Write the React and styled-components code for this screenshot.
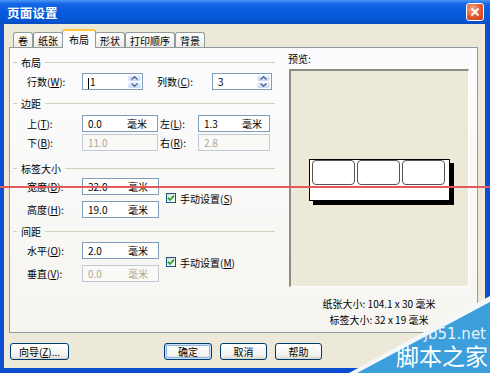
import React from 'react'
import styled, { createGlobalStyle } from 'styled-components'

const GlobalStyle = createGlobalStyle`
    body {
        margin: 0;
        font-family: "Noto Sans CJK SC", "Liberation Sans", sans-serif;
        font-size: 10px;
        color: #000;
    }
`

const Window = styled.div`
    position: relative;
    width: 490px;
    height: 373px;
    display: flex;
    flex-direction: column;
    background: #0B4FD0;
    overflow: hidden;
`

const TitleBar = styled.div`
    height: 24px;
    flex: none;
    display: flex;
    align-items: center;
    justify-content: space-between;
    padding: 0 6px 0 7px;
    background: linear-gradient(180deg, #4A95F6 0%, #1466E4 16%, #075CDC 50%, #0556D4 85%, #0A49BE 100%);
    color: #fff;
    font-size: 12.5px;
    font-weight: 700;
    letter-spacing: 0.2px;
`

const CloseButton = styled.div`
    width: 18px;
    height: 18px;
    box-sizing: border-box;
    border: 1px solid #fff;
    border-radius: 3px;
    background: radial-gradient(circle at 35% 30%, #F4A888, #E2582E 55%, #C03A14);
    display: flex;
    align-items: center;
    justify-content: center;
`

const Body = styled.div`
    flex: 1;
    margin: 0 5px 5px 4px;
    padding: 5px 7px 8px 5px;
    background: #ECE9D8;
    display: flex;
    flex-direction: column;
`

const TabStrip = styled.div`
    display: flex;
    align-items: flex-end;
    height: 18px;
    padding-left: 4px;
    position: relative;
    z-index: 1;
`

const Tab = styled.div`
    height: ${p => (p.$active ? 19 : 15)}px;
    margin: 0 ${p => (p.$active ? -1 : 0)}px ${p => (p.$active ? -1 : 0)}px;
    padding: 0 ${p => (p.$active ? 6 : 4)}px;
    box-sizing: border-box;
    border: 1px solid #919B9C;
    border-bottom: none;
    border-top: ${p => (p.$active ? '2px solid #FFC83C' : '1px solid #919B9C')};
    border-radius: 3px 3px 0 0;
    background: ${p => (p.$active ? '#FCFCFE' : 'linear-gradient(#FFFFFF, #ECEBE6)')};
    display: flex;
    align-items: center;
    white-space: nowrap;
    position: relative;
    z-index: ${p => (p.$active ? 2 : 1)};
`

const Panel = styled.div`
    flex: 1;
    border: 1px solid #919B9C;
    background: linear-gradient(#FCFCFE, #F6F5F0);
    display: flex;
`

const LeftCol = styled.div`
    width: 270px;
    flex: none;
    padding: 7px 5px 0 0;
    box-sizing: border-box;
`

const GroupHeader = styled.div`
    display: flex;
    align-items: center;
    gap: 4px;
    height: 14px;
    padding-left: 3px;
    margin-top: ${p => p.$mt || 0}px;
    &::before {
        content: '';
        width: 4px;
        border-top: 1px solid #D0D0BF;
    }
    &::after {
        content: '';
        flex: 1;
        border-top: 1px solid #D0D0BF;
    }
`

const Rows = styled.div`
    display: flex;
    flex-direction: column;
    gap: ${p => p.$gap}px;
    margin-top: ${p => p.$mt}px;
`

const Row = styled.div`
    display: flex;
    align-items: center;
    height: 17px;
    padding-left: 17px;
`

const Label = styled.span`
    width: ${p => p.$w}px;
    margin-left: ${p => p.$ml || 0}px;
    flex: none;
    white-space: nowrap;
`

const Key = styled.span`
    text-decoration: underline;
`

const Field = styled.div`
    width: ${p => p.$w}px;
    height: 17px;
    flex: none;
    box-sizing: border-box;
    border: 1px solid ${p => (p.$disabled ? '#C3C9D3' : '#7F9DB9')};
    background: ${p => (p.$disabled ? '#F9F9F6' : '#fff')};
    color: ${p => (p.$disabled ? '#ACA899' : '#000')};
    display: flex;
    align-items: center;
    justify-content: space-between;
    padding: 0 ${p => (p.$pr === undefined ? 10 : p.$pr)}px 0 5px;
`

const Caret = styled.span`
    display: inline-block;
    width: 1px;
    height: 11px;
    background: #000;
    margin-right: 1px;
    vertical-align: middle;
`

const Spin = styled.div`
    display: flex;
    flex-direction: column;
    gap: 1px;
    width: 13px;
    height: 13px;
`

const SpinBtn = styled.div`
    flex: 1;
    border-radius: 2px;
    background: linear-gradient(#EEF3FE, #C6D6FA);
    display: flex;
    align-items: center;
    justify-content: center;
`

const SizeBlock = styled.div`
    display: flex;
    align-items: center;
    margin-top: ${p => p.$mt}px;
`

const CheckLabel = styled.div`
    display: flex;
    align-items: center;
    gap: 4px;
    margin-left: 7px;
    white-space: nowrap;
`

const CheckBox = styled.span`
    width: 10px;
    height: 10px;
    box-sizing: border-box;
    border: 1px solid #1C5180;
    background: linear-gradient(135deg, #DCDCD7, #FFFFFF);
    display: flex;
    align-items: center;
    justify-content: center;
`

const PreviewCol = styled.div`
    flex: 1;
    padding-top: 4px;
    display: flex;
    flex-direction: column;
`

const Caption = styled.div`
    height: 14px;
    line-height: 14px;
    padding-left: 8px;
`

const PreviewBox = styled.div`
    margin: 3px 0 0 9px;
    width: 180px;
    height: 218px;
    box-sizing: border-box;
    border-top: 2px solid #8E8B80;
    border-left: 2px solid #8E8B80;
    border-right: 1px solid #fff;
    border-bottom: 1px solid #fff;
    background: #ECE9D8;
    display: flex;
    align-items: center;
    justify-content: center;
`

const Paper = styled.div`
    width: 141px;
    height: 42px;
    margin-top: 3px;
    box-sizing: border-box;
    border: 1px solid #000;
    background: #fff;
    box-shadow: 4px 4px 0 #000;
    display: flex;
    gap: 2px;
    padding-left: 2px;
`

const LabelCell = styled.div`
    width: 43px;
    height: 25px;
    box-sizing: border-box;
    border: 1px solid #555;
    border-radius: 4px;
`

const SizeInfo = styled.div`
    margin: 9px 0 0 9px;
    width: 180px;
    text-align: center;
    line-height: 16px;
`

const ButtonRow = styled.div`
    display: flex;
    margin-top: 10px;
    padding-left: 1px;
`

const ButtonGroup = styled.div`
    display: flex;
    gap: 8px;
    margin-left: 95px;
`

const Button = styled.div`
    width: ${p => p.$w}px;
    height: 17px;
    box-sizing: border-box;
    border: 1px solid #003C74;
    border-radius: 3px;
    background: linear-gradient(#FFFFFF, #F3F3EF 75%, #D8D3C8);
    box-shadow: ${p => (p.$default ? 'inset 0 0 0 1px #CDE0FB, inset 0 0 0 2px #8DB2EE' : 'none')};
    display: flex;
    align-items: center;
    justify-content: center;
    white-space: nowrap;
`

const RedLine = styled.div`
    position: absolute;
    left: 0;
    top: 186px;
    width: 490px;
    height: 2px;
    background: #E45A5A;
    pointer-events: none;
`

const Watermark = styled.svg`
    position: absolute;
    right: 0;
    bottom: 0;
    pointer-events: none;
`

const Arrow = ({ up }) => (
    <svg width="7" height="4" viewBox="0 0 7 4">
        <path
            d={up ? 'M0.5 3.5 L3.5 0.8 L6.5 3.5' : 'M0.5 0.5 L3.5 3.2 L6.5 0.5'}
            fill="none"
            stroke="#4D6185"
            strokeWidth="1.3"
        />
    </svg>
)

const SpinField = ({ w, value, caret }) => (
    <Field $w={w} $pr={1}>
        <span>
            {caret && <Caret />}
            {value}
        </span>
        <Spin>
            <SpinBtn>
                <Arrow up />
            </SpinBtn>
            <SpinBtn>
                <Arrow />
            </SpinBtn>
        </Spin>
    </Field>
)

const MmField = ({ w, value, disabled, pr }) => (
    <Field $w={w} $disabled={disabled} $pr={pr}>
        <span>{value}</span>
        {value !== '11.0' && value !== '2.8' && <span>毫米</span>}
    </Field>
)

const Check = ({ children }) => (
    <CheckLabel>
        <CheckBox>
            <svg width="8" height="8" viewBox="0 0 8 8">
                <path d="M1 3.8 L3 6 L7 1.6" fill="none" stroke="#21A121" strokeWidth="1.6" />
            </svg>
        </CheckBox>
        <span>{children}</span>
    </CheckLabel>
)

const tabs = ['卷', '纸张', '布局', '形状', '打印顺序', '背景']

const App = () => (
    <Window>
        <GlobalStyle />
        <TitleBar>
            <span>页面设置</span>
            <CloseButton>
                <svg width="10" height="10" viewBox="0 0 10 10">
                    <path d="M1.5 1.5 L8.5 8.5 M8.5 1.5 L1.5 8.5" stroke="#fff" strokeWidth="1.8" />
                </svg>
            </CloseButton>
        </TitleBar>
        <Body>
            <TabStrip>
                {tabs.map(t => (
                    <Tab key={t} $active={t === '布局'}>
                        {t}
                    </Tab>
                ))}
            </TabStrip>
            <Panel>
                <LeftCol>
                    <GroupHeader>布局</GroupHeader>
                    <Rows $mt={4} $gap={0}>
                        <Row>
                            <Label $w={55}>
                                行数(<Key>W</Key>):
                            </Label>
                            <SpinField w={61} value="1" caret />
                            <Label $w={55} $ml={14}>
                                列数(<Key>C</Key>):
                            </Label>
                            <SpinField w={60} value="3" />
                        </Row>
                    </Rows>

                    <GroupHeader $mt={6}>边距</GroupHeader>
                    <Rows $mt={5} $gap={2}>
                        <Row>
                            <Label $w={55}>
                                上(<Key>T</Key>):
                            </Label>
                            <MmField w={76} value="0.0" />
                            <Label $w={38} $ml={2}>
                                左(<Key>L</Key>):
                            </Label>
                            <MmField w={72} value="1.3" pr={7} />
                        </Row>
                        <Row>
                            <Label $w={55}>
                                下(<Key>B</Key>):
                            </Label>
                            <MmField w={76} value="11.0" disabled />
                            <Label $w={38} $ml={2}>
                                右(<Key>R</Key>):
                            </Label>
                            <MmField w={72} value="2.8" disabled />
                        </Row>
                    </Rows>

                    <GroupHeader $mt={10}>标签大小</GroupHeader>
                    <SizeBlock $mt={3}>
                        <Rows $mt={0} $gap={6}>
                            <Row>
                                <Label $w={55}>
                                    宽度(<Key>D</Key>):
                                </Label>
                                <MmField w={77} value="32.0" />
                            </Row>
                            <Row>
                                <Label $w={55}>
                                    高度(<Key>H</Key>):
                                </Label>
                                <MmField w={77} value="19.0" />
                            </Row>
                        </Rows>
                        <Check>
                            手动设置(<Key>S</Key>)
                        </Check>
                    </SizeBlock>

                    <GroupHeader $mt={6}>间距</GroupHeader>
                    <SizeBlock $mt={4}>
                        <Rows $mt={0} $gap={6}>
                            <Row>
                                <Label $w={55}>
                                    水平(<Key>O</Key>):
                                </Label>
                                <MmField w={77} value="2.0" />
                            </Row>
                            <Row>
                                <Label $w={55}>
                                    垂直(<Key>V</Key>):
                                </Label>
                                <MmField w={77} value="0.0" disabled />
                            </Row>
                        </Rows>
                        <Check>
                            手动设置(<Key>M</Key>)
                        </Check>
                    </SizeBlock>
                </LeftCol>

                <PreviewCol>
                    <Caption>预览:</Caption>
                    <PreviewBox>
                        <Paper>
                            <LabelCell />
                            <LabelCell />
                            <LabelCell />
                        </Paper>
                    </PreviewBox>
                    <SizeInfo>
                        纸张大小: 104.1 x 30 毫米
                        <br />
                        标签大小: 32 x 19 毫米
                    </SizeInfo>
                </PreviewCol>
            </Panel>
            <ButtonRow>
                <Button $w={59}>
                    向导(<Key>Z</Key>)...
                </Button>
                <ButtonGroup>
                    <Button $w={48} $default>
                        确定
                    </Button>
                    <Button $w={47}>取消</Button>
                    <Button $w={47}>帮助</Button>
                </ButtonGroup>
            </ButtonRow>
        </Body>

        <RedLine />

        <Watermark width="145" height="80" viewBox="0 0 145 80">
            <polygon points="4,80 145,3 145,80" fill="#F4F8FB" />
            <polygon points="12,80 145,9 145,80" fill="#3C9EDB" />
            <text
                x="141"
                y="46"
                textAnchor="end"
                fill="#EAF5FD"
                fontSize="15"
                fontFamily="'DejaVu Sans', sans-serif"
            >
                jb51.net
            </text>
            <text
                x="143"
                y="72"
                textAnchor="end"
                fill="#FFFFFF"
                fontSize="23"
                fontFamily="'Noto Sans CJK SC', sans-serif"
            >
                脚本之家
            </text>
        </Watermark>
    </Window>
)

export default App
